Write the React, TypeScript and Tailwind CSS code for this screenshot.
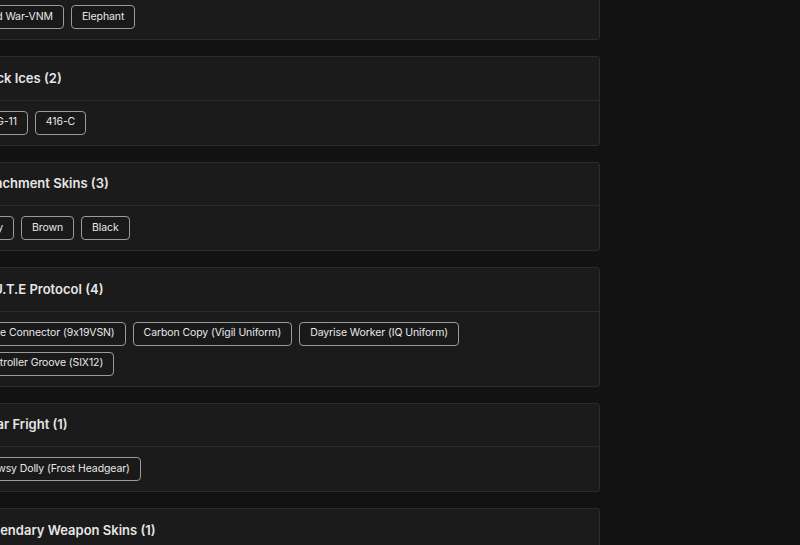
import React from "react";

type Group = { title: string; items: string[] };

const groups: Group[] = [
  { title: "Year 5 Operation Skins (2)", items: ["Cold War-VNM", "Elephant"] },
  { title: "Black Ices (2)", items: ["SMG-11", "416-C"] },
  { title: "Attachment Skins (3)", items: ["Gray", "Brown", "Black"] },
  {
    title: "M.U.T.E Protocol (4)",
    items: [
      "Code Connector (9x19VSN)",
      "Carbon Copy (Vigil Uniform)",
      "Dayrise Worker (IQ Uniform)",
      "Controller Groove (SIX12)",
    ],
  },
  { title: "Polar Fright (1)", items: ["Drowsy Dolly (Frost Headgear)"] },
  { title: "Legendary Weapon Skins (1)", items: ["Glacier Gold (R4-C)"] },
];

function Card({ g }: { g: Group }) {
  return (
    <div className="w-[640px] shrink-0 rounded-[3px] border border-[#2c2c2c] bg-[#1b1b1b]">
      <div className="flex h-[43.5px] items-center border-b border-[#2c2c2c] px-4 text-[13px] font-semibold text-[#e6e6e6]">
        {g.title}
      </div>
      <div className="flex flex-wrap gap-x-[7px] gap-y-[6px] py-2.5 pr-3 pl-2">
        {g.items.map((it) => (
          <span
            key={it}
            className="flex h-[24px] items-center rounded-[4px] border border-[#9a9a9a] bg-[#191919] px-2.5 text-[10.5px] leading-none tracking-[-0.1px] text-[#e8e8e8]"
          >
            {it}
          </span>
        ))}
      </div>
    </div>
  );
}

export default function App() {
  return (
    <div
      className="h-[545px] w-[800px] overflow-hidden bg-[#121212]"
      style={{ fontFamily: "Inter, 'Noto Sans', sans-serif" }}
    >
      <div className="-mt-[49.5px] -ml-[40px] flex flex-col gap-4">
        {groups.map((g) => (
          <Card key={g.title} g={g} />
        ))}
      </div>
    </div>
  );
}
